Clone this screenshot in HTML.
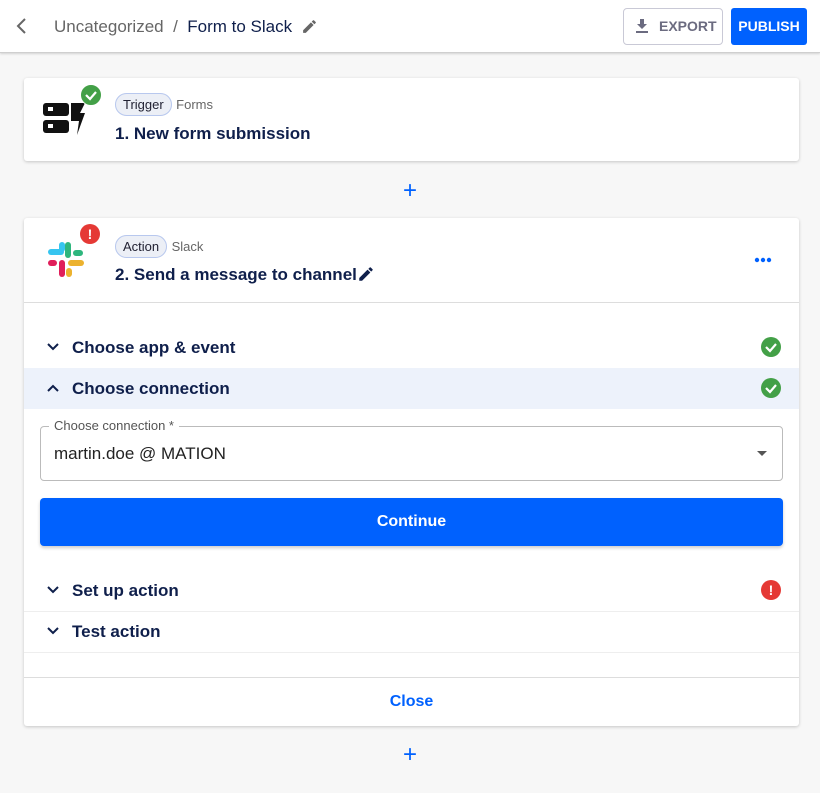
<!DOCTYPE html><html><head><style>
body{margin:0;width:820px;height:793px;background:#f7f7f7;font-family:"Liberation Sans",sans-serif;position:relative;overflow:hidden;color:#0f1f4b}
.a{position:absolute}
.hdr{left:0;top:0;width:820px;height:52px;background:#fff;border-bottom:1px solid #cfcfcf;box-shadow:0 1px 2px rgba(0,0,0,.15)}
.card{background:#fff;box-shadow:0 1px 3px rgba(0,0,0,.2);border-radius:3px}
.chip{border:1px solid #b8c8ee;background:#eceff6;border-radius:12px;font-size:13px;color:#223;padding:3px 7px}
.row{left:24px;width:775px;height:41px;border-bottom:1px solid #eee}
.row span{position:absolute;left:48px;top:11px;font-size:17px;font-weight:bold;color:#0f1f4b}
.chev{position:absolute;left:22px;top:14px}
.ok{position:absolute;right:18px;top:10px;width:20px;height:20px;border-radius:50%;background:#43a047}
</style></head><body>
<div class="a hdr">
<svg class="a" style="left:15px;top:17px" width="14" height="18"><path d="M10 2L3 9l7 7" stroke="#666" stroke-width="2" fill="none"/></svg>
<div class="a" style="left:54px;top:17px;font-size:17px;color:#666">Uncategorized &nbsp;/&nbsp; <span style="color:#0f1f4b">Form to Slack</span></div>
<svg class="a" style="left:301px;top:18px" width="17" height="17" viewBox="0 0 24 24"><path d="M3 17.25V21h3.75L17.8 9.94l-3.75-3.75zM20.7 7.04a1 1 0 000-1.41l-2.34-2.34a1 1 0 00-1.41 0l-1.83 1.83 3.75 3.75z" fill="#666"/></svg>
<div class="a" style="left:623px;top:8px;width:100px;height:37px;border:1px solid #c9c9d6;border-radius:4px;box-sizing:border-box;font-size:14px;font-weight:bold;color:#6b6b80;line-height:35px"><svg class="a" style="left:12px;top:10px" width="12" height="15"><path d="M4 0h4v5h3L6 10 1 5h3z" fill="#6b6b80"/><rect x="0" y="12" width="12" height="2" fill="#6b6b80"/></svg><span style="position:absolute;left:35px">EXPORT</span></div>
<div class="a" style="left:731px;top:8px;width:76px;height:37px;background:#0061fe;border-radius:3px;color:#fff;font-size:14px;font-weight:bold;text-align:center;line-height:37px">PUBLISH</div>
</div>

<div class="a card" style="left:24px;top:78px;width:775px;height:83px">
<svg class="a" style="left:19px;top:23px" width="44" height="36"><rect x="0" y="2" width="26" height="13" rx="3" fill="#111"/><rect x="0" y="19" width="26" height="13" rx="3" fill="#111"/><rect x="5" y="6" width="5" height="4" fill="#fff"/><rect x="5" y="23" width="5" height="4" fill="#fff"/><path d="M28 2h14l-5 10h5L34 34l2-14h-8z" fill="#111"/></svg>
<div class="a" style="left:56px;top:6px;width:20px;height:20px;border-radius:50%;background:#43a047;border:1px solid #fff"><svg width="20" height="20"><path d="M5 10l4 4 6-7" stroke="#fff" stroke-width="2.2" fill="none"/></svg></div>
<div class="a" style="left:91px;top:18px"><span class="chip">Trigger</span> <span style="font-size:13px;color:#666">Forms</span></div>
<div class="a" style="left:91px;top:46px;font-size:17px;font-weight:bold">1. New form submission</div>
</div>
<div class="a" style="left:403px;top:177px;font-size:24px;color:#0061fe">+</div>

<div class="a card" style="left:24px;top:218px;width:775px;height:508px"></div>
<svg class="a" style="left:47px;top:241px" width="38" height="38" viewBox="0 0 38 38"><g stroke-linecap="round" stroke-width="6"><path d="M4 11h10" stroke="#36c5f0"/><path d="M15 4v4" stroke="#36c5f0"/><path d="M21 4v10" stroke="#2eb67d"/><path d="M29 12h4" stroke="#2eb67d"/><path d="M24 22h10" stroke="#ecb22e"/><path d="M22 30v3" stroke="#ecb22e"/><path d="M15 22v11" stroke="#e01e5a"/><path d="M4 22h3" stroke="#e01e5a"/></g></svg>
<div class="a" style="left:80px;top:224px;width:20px;height:20px;border-radius:50%;background:#e53935;color:#fff;font-weight:bold;font-size:14px;text-align:center;line-height:20px">!</div>
<div class="a" style="left:115px;top:238px"><span class="chip">Action</span> <span style="font-size:13px;color:#666">Slack</span></div>
<div class="a" style="left:115px;top:265px;font-size:17px;font-weight:bold">2. Send a message to channel</div>
<svg class="a" style="left:357px;top:265px" width="18" height="18" viewBox="0 0 24 24"><path d="M3 17.25V21h3.75L17.8 9.94l-3.75-3.75zM20.7 7.04a1 1 0 000-1.41l-2.34-2.34a1 1 0 00-1.41 0l-1.83 1.83 3.75 3.75z" fill="#0f1f4b"/></svg>
<div class="a" style="left:754px;top:257px;font-size:0"><svg width="18" height="6"><circle cx="3" cy="3" r="2.2" fill="#0061fe"/><circle cx="9" cy="3" r="2.2" fill="#0061fe"/><circle cx="15" cy="3" r="2.2" fill="#0061fe"/></svg></div>
<div class="a" style="left:24px;top:302px;width:775px;border-top:1px solid #ddd"></div>

<div class="a row" style="top:327px;border:none"><svg class="chev" width="14" height="12"><path d="M2 3l5 5 5-5" stroke="#0f1f4b" stroke-width="2" fill="none"/></svg><span>Choose app &amp; event</span><div class="ok"><svg width="20" height="20"><path d="M5 10l4 4 6-7" stroke="#fff" stroke-width="2.2" fill="none"/></svg></div></div>
<div class="a row" style="top:368px;background:#edf2fb;border:none"><svg class="chev" width="14" height="12"><path d="M2 9l5-5 5 5" stroke="#0f1f4b" stroke-width="2" fill="none"/></svg><span>Choose connection</span><div class="ok"><svg width="20" height="20"><path d="M5 10l4 4 6-7" stroke="#fff" stroke-width="2.2" fill="none"/></svg></div></div>

<div class="a" style="left:40px;top:426px;width:743px;height:55px;border:1px solid #bbb;border-radius:4px;box-sizing:border-box"></div>
<div class="a" style="left:49px;top:418px;background:#fff;padding:0 5px;font-size:13px;color:#555">Choose connection *</div>
<div class="a" style="left:54px;top:444px;font-size:17px;color:#222">martin.doe @ MATION</div>
<svg class="a" style="left:756px;top:450px" width="12" height="8"><path d="M1 1h10L6 6z" fill="#555"/></svg>
<div class="a" style="left:40px;top:498px;width:743px;height:48px;background:#0061fe;border-radius:4px;color:#fff;font-size:16px;font-weight:bold;text-align:center;line-height:48px;box-shadow:0 2px 3px rgba(0,0,0,.2)">Continue</div>

<div class="a row" style="top:570px"><svg class="chev" width="14" height="12"><path d="M2 3l5 5 5-5" stroke="#0f1f4b" stroke-width="2" fill="none"/></svg><span>Set up action</span><div class="ok" style="background:#e53935;color:#fff;font-weight:bold;font-size:14px;text-align:center;line-height:20px">!</div></div>
<div class="a row" style="top:611px"><svg class="chev" width="14" height="12"><path d="M2 3l5 5 5-5" stroke="#0f1f4b" stroke-width="2" fill="none"/></svg><span>Test action</span></div>
<div class="a" style="left:24px;top:677px;width:775px;border-top:1px solid #ddd"></div>
<div class="a" style="left:24px;top:693px;width:775px;text-align:center;font-size:16px;font-weight:bold;color:#0061fe">Close</div>
<div class="a" style="left:403px;top:741px;font-size:24px;color:#0061fe">+</div>
</body></html>
